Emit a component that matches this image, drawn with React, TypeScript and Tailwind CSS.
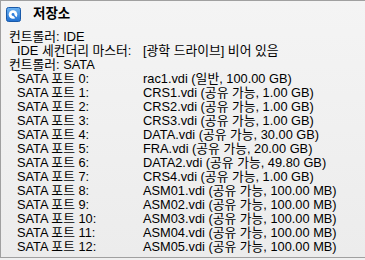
import React from "react";

const ports = [
  ["SATA 포트 0:", "rac1.vdi (일반, 100.00 GB)"],
  ["SATA 포트 1:", "CRS1.vdi (공유 가능, 1.00 GB)"],
  ["SATA 포트 2:", "CRS2.vdi (공유 가능, 1.00 GB)"],
  ["SATA 포트 3:", "CRS3.vdi (공유 가능, 1.00 GB)"],
  ["SATA 포트 4:", "DATA.vdi (공유 가능, 30.00 GB)"],
  ["SATA 포트 5:", "FRA.vdi (공유 가능, 20.00 GB)"],
  ["SATA 포트 6:", "DATA2.vdi (공유 가능, 49.80 GB)"],
  ["SATA 포트 7:", "CRS4.vdi (공유 가능, 1.00 GB)"],
  ["SATA 포트 8:", "ASM01.vdi (공유 가능, 100.00 MB)"],
  ["SATA 포트 9:", "ASM02.vdi (공유 가능, 100.00 MB)"],
  ["SATA 포트 10:", "ASM03.vdi (공유 가능, 100.00 MB)"],
  ["SATA 포트 11:", "ASM04.vdi (공유 가능, 100.00 MB)"],
  ["SATA 포트 12:", "ASM05.vdi (공유 가능, 100.00 MB)"],
];

function DiskIcon() {
  return (
    <svg width="15" height="15" viewBox="0 0 15 15">
      <defs>
        <linearGradient id="g" x1="0" y1="0" x2="0" y2="1">
          <stop offset="0" stopColor="#6db3f2" />
          <stop offset="1" stopColor="#1f6fd0" />
        </linearGradient>
      </defs>
      <rect x="0.5" y="0.5" width="14" height="14" rx="2" fill="url(#g)" stroke="#1a5aa8" />
      <circle cx="7" cy="7.5" r="4.3" fill="#fff" />
      <circle cx="7" cy="7.5" r="1.4" fill="#2f7fdc" />
      <path d="M7.5 8 L10.5 11.5" stroke="#2f7fdc" strokeWidth="1.4" />
    </svg>
  );
}

function Row({ label, value }: { label: string; value: string }) {
  return (
    <div className="flex h-[14px] items-center">
      <span className="w-[134px] pl-[8px] shrink-0 whitespace-nowrap">{label}</span>
      <span className="whitespace-nowrap">{value}</span>
    </div>
  );
}

export default function App() {
  return (
    <div
      className="w-[365px] h-[260px] bg-[#f0f0f0] text-[12.8px] text-black overflow-hidden"
      style={{ fontFamily: '"Liberation Sans", "Noto Sans CJK KR", sans-serif' }}
    >
      <div className="h-[258px] border-t border-l border-b border-[#a0a0a0] bg-gradient-to-b from-[#f4f4f4] to-[#ececec]">
        {/* Header */}
        <div className="flex items-center h-[26px] pl-[5px] gap-[12px]">
          <DiskIcon />
          <span className="font-bold text-[13.5px]">저장소</span>
        </div>

        {/* Details */}
        <div className="pl-[8px] pt-[3px] leading-[14px]">
          <div className="h-[14px]">컨트롤러: IDE</div>
          <Row label="IDE 세컨더리 마스터:" value="[광학 드라이브] 비어 있음" />
          <div className="h-[14px]">컨트롤러: SATA</div>
          {ports.map(([l, v]) => (
            <Row key={l} label={l} value={v} />
          ))}
        </div>
      </div>
    </div>
  );
}
